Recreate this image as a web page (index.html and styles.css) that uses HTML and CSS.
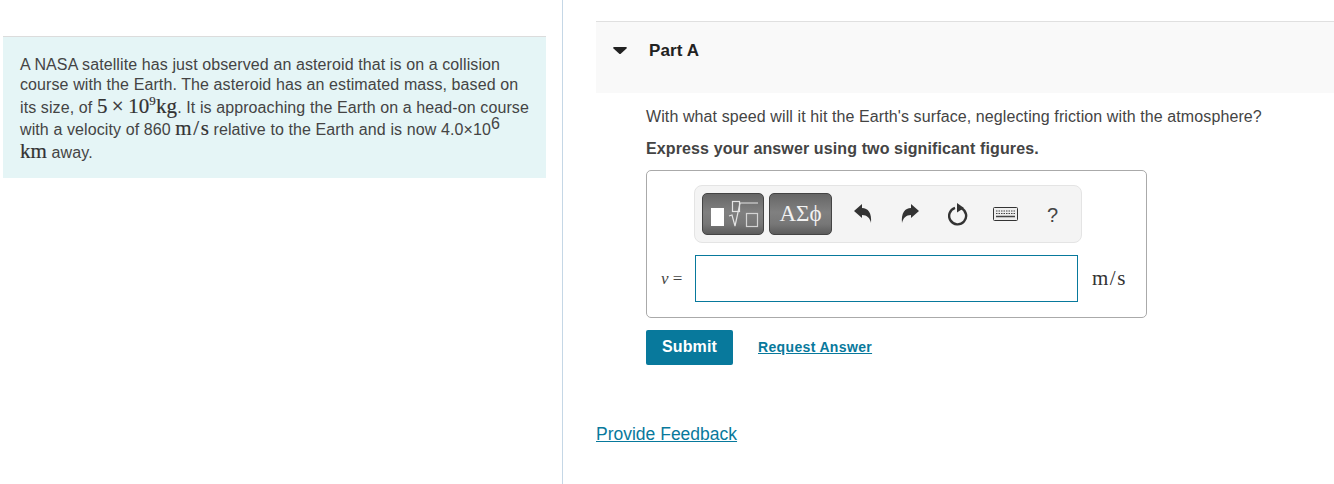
FILE: index.html
```html
<!DOCTYPE html>
<html lang="en">
<head>
    <meta charset="UTF-8">
    <title>Part A</title>
    <link rel="stylesheet" href="styles.css">
</head>
<body>
    <div class="page">
        <div class="leftcol">
            <div class="intro">
                <div class="line">A NASA satellite has just observed an asteroid that is on a collision</div>
                <div class="line">course with the Earth. The asteroid has an estimated mass, based on</div>
                <div class="line gap">its size, of <span class="math">5 × 10<sup>9</sup>kg</span>. It is approaching the Earth on a head-on course</div>
                <div class="line gap">with a velocity of 860 <span class="math">m<span class="slash">/</span>s</span> relative to the Earth and is now 4.0×10<sup class="exp">6</sup></div>
                <div class="line gap"><span class="math">km</span> away.</div>
            </div>
        </div>
        <div class="rightcol">
            <div class="parthead">
                <svg class="caret" width="14" height="7" viewBox="0 0 14 7"><path d="M1 0h12c1 0 1 1 .5 1.500L7.500 7h-1L.5 1.500C0 1 0 0 1 0z" fill="#222"/></svg>
                <span class="parttitle">Part A</span>
            </div>
            <div class="partbody">
                <p class="question">With what speed will it hit the Earth's surface, neglecting friction with the atmosphere?</p>
                <p class="hint">Express your answer using two significant figures.</p>
                <div class="answerbox">
                    <div class="toolbar">
                        <button class="toolbtn tmpl">
                            <svg width="60" height="40" viewBox="0 0 60 40">
                                <rect x="8" y="14" width="13" height="18" fill="#fff"/>
                                <rect x="29.500" y="7.500" width="7" height="10" fill="none" stroke="#e4e4e4" stroke-width="1.200"/>
                                <path d="M26 22l3-1 3 11 5-23h18" fill="none" stroke="#e4e4e4" stroke-width="1.200"/>
                                <rect x="43.500" y="19.500" width="11" height="13" fill="none" stroke="#d4d4d4" stroke-width="1.200"/>
                            </svg>
                        </button>
                        <button class="toolbtn greek">ΑΣϕ</button>
                        <span class="icon undo">
                            <svg width="18" height="20" viewBox="0 0 18 20"><path d="M0 7l8-7v4c6 0 10 5 9 15-1-5-4-8-9-8v3z" fill="#333"/></svg>
                        </span>
                        <span class="icon redo">
                            <svg width="18" height="20" viewBox="0 0 18 20"><path d="M18 7l-8-7v4C4 4 0 9 1 19c1-5 4-8 9-8v3z" fill="#333"/></svg>
                        </span>
                        <span class="icon reset">
                            <svg width="20" height="24" viewBox="0 0 20 24"><path d="M13.500 6.300A8.500 8.500 0 1 1 7 5.800" fill="none" stroke="#333" stroke-width="2.400"/><path d="M9 1l7 5-7 4.500z" fill="#333"/></svg>
                        </span>
                        <span class="icon keys">
                            <svg width="25" height="14" viewBox="0 0 25 14"><rect x=".5" y=".5" width="24" height="13" rx="1" fill="#eee" stroke="#333"/><path d="M3 4h19M3 6.500h19" stroke="#444" stroke-dasharray="1.500 1"/><path d="M3 9.500h19" stroke="#444" stroke-width="1.500"/></svg>
                        </span>
                        <span class="help">?</span>
                    </div>
                    <div class="inputrow">
                        <span class="varlabel"><i>v</i> =</span>
                        <input class="answerinput" type="text">
                        <span class="units">m<span class="slash">/</span>s</span>
                    </div>
                </div>
                <div class="actions">
                    <button class="submit">Submit</button>
                    <a class="reqlink" href="#">Request Answer</a>
                </div>
            </div>
            <a class="feedback" href="#">Provide Feedback</a>
        </div>
    </div>
</body>
</html>
```
FILE: styles.css
```css
*{
    margin: 0;
    padding: 0;
    box-sizing: border-box;
}
html, body{
    height: 100%;
    overflow: hidden;
}
body{
    background: #fff;
    font-family: "Liberation Sans", Arial, sans-serif;
    font-size: 16px;
    color: #444;
}
.page{
    display: flex;
    height: 484px;
}
.leftcol{
    width: 563px;
    height: 100%;
    padding: 36px 16px 0 3px;
    border-right: 1px solid #c5d7e6;
    flex-shrink: 0;
}
.intro{
    height: 142px;
    padding: 18px 0 0 17px;
    background: #e5f5f6;
    border-top: 1px solid #dcdcdc;
    letter-spacing: 0.1px;
}
.line{
    height: 20px;
    line-height: 20px;
    white-space: nowrap;
}
.gap{
    margin-top: 2.500px;
}
.math{
    font-family: "Liberation Serif", "Times New Roman", serif;
    font-size: 21px;
    line-height: 0;
    word-spacing: -1px;
    color: #333;
    -webkit-text-stroke: 0.2px #333;
}
.slash{
    margin: 0 1.500px;
}
.intro sup{
    font-size: 13px;
    line-height: 0;
}
.intro sup.exp{
    font-size: 16px;
    vertical-align: 6px;
}
.rightcol{
    flex: 1;
    padding: 21px 0 0 33px;
}
.parthead{
    display: flex;
    align-items: flex-start;
    height: 72px;
    padding: 20px 0 0 17px;
    background: #f9f9f9;
    border-top: 1px solid #e0e0e0;
}
.caret{
    margin-top: 5px;
}
.parttitle{
    margin-left: 22px;
    font-size: 17px;
    font-weight: bold;
    color: #222;
    line-height: 18px;
    letter-spacing: 0.1px;
}
.partbody{
    padding: 13px 0 0 50px;
}
.question{
    line-height: 22px;
    letter-spacing: 0.1px;
}
.hint{
    margin-top: 10px;
    font-weight: bold;
    line-height: 22px;
    letter-spacing: 0.12px;
}
.answerbox{
    width: 501px;
    height: 148px;
    margin-top: 10px;
    padding: 14px 19px 0 13px;
    border: 1px solid #aaa;
    border-radius: 5px;
}
.toolbar{
    display: flex;
    align-items: center;
    width: 388px;
    height: 58px;
    margin-left: 34px;
    padding-left: 7px;
    background: #f4f4f4;
    border: 1px solid #e4e4e4;
    border-radius: 8px;
}
.toolbtn{
    height: 42px;
    border: 1px solid #444;
    border-radius: 5px;
    background: linear-gradient(#666, #808080 45%, #777 75%, #5c5c5c);
    color: #fff;
}
.tmpl{
    width: 62px;
    margin-right: 5px;
}
.tmpl svg{
    display: block;
}
.greek{
    width: 63px;
    font-family: "Liberation Serif", serif;
    font-size: 23px;
    color: #f2f2f2;
}
.icon{
    display: flex;
}
.undo{
    margin-left: 22px;
}
.redo{
    margin-left: 29px;
}
.reset{
    margin-left: 29px;
}
.keys{
    margin-left: 25px;
}
.help{
    margin-left: 29px;
    padding-top: 2px;
    font-size: 20px;
    color: #444;
}
.inputrow{
    display: flex;
    align-items: center;
    margin-top: 12px;
}
.varlabel{
    width: 34px;
    margin-left: 1px;
    font-family: "Liberation Serif", serif;
    font-size: 17px;
    color: #444;
}
.answerinput{
    width: 383px;
    height: 47px;
    border: 1px solid #08799c;
    background: #fff;
}
.units{
    margin-left: 14px;
    font-family: "Liberation Serif", serif;
    font-size: 21px;
    color: #333;
}
.actions{
    display: flex;
    align-items: center;
    margin-top: 12px;
}
.submit{
    width: 87px;
    height: 35px;
    padding-bottom: 2px;
    border: none;
    border-radius: 2px;
    background: #08799c;
    color: #fff;
    font-family: "Liberation Sans", Arial, sans-serif;
    font-size: 16px;
    font-weight: bold;
    letter-spacing: 0.1px;
}
.reqlink{
    margin-left: 25px;
    margin-bottom: 2px;
    color: #08799c;
    font-size: 14px;
    font-weight: bold;
    letter-spacing: 0.35px;
}
.feedback{
    display: inline-block;
    margin-top: 59px;
    color: #08799c;
    font-size: 17.500px;
}
```
